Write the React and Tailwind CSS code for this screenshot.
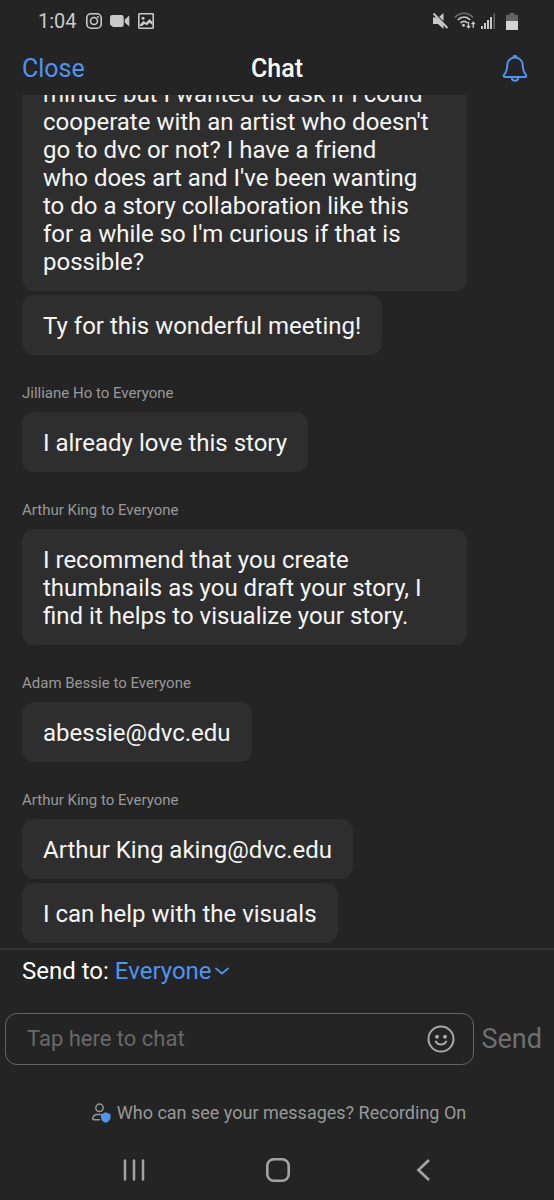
import React from "react";

const groups = [
  {
    messages: [
      "minute but I wanted to ask if I could\ncooperate with an artist who doesn't\ngo to dvc or not? I have a friend\nwho does art and I've been wanting\nto do a story collaboration like this\nfor a while so I'm curious if that is\npossible?",
      "Ty for this wonderful meeting!",
    ],
  },
  { from: "Jilliane Ho to Everyone", messages: ["I already love this story"] },
  {
    from: "Arthur King to Everyone",
    messages: [
      "I recommend that you create thumbnails as you draft your story, I find it helps to visualize your story.",
    ],
  },
  { from: "Adam Bessie to Everyone", messages: ["abessie@dvc.edu"] },
  {
    from: "Arthur King to Everyone",
    messages: ["Arthur King aking@dvc.edu", "I can help with the visuals"],
  },
];

function StatusBar() {
  return (
    <div className="flex h-[42px] shrink-0 items-center justify-between pl-[38px] pr-9 text-[#c9c9c9]">
      <div className="flex items-center gap-2">
        <span className="mr-px text-xl leading-6">1:04</span>
        <svg width="16" height="16" viewBox="0 0 16 16" fill="none" stroke="currentColor" strokeWidth="1.6" aria-hidden="true">
          <rect x="0.8" y="0.8" width="14.4" height="14.4" rx="4.2" />
          <circle cx="8" cy="8" r="3.5" />
          <circle cx="12" cy="4" r="1" fill="currentColor" stroke="none" />
        </svg>
        <svg width="20" height="12" viewBox="0 0 20 12" fill="currentColor" aria-hidden="true">
          <path d="M2.200 0h9.300a2.200 2.200 0 0 1 2.200 2.200v7.600a2.200 2.200 0 0 1-2.200 2.200H3L0 9.500V2.200A2.200 2.200 0 0 1 2.200 0z" />
          <path d="M14.800 4.500 19.300.6v10.800l-4.500-3.900z" />
        </svg>
        <svg width="16" height="16" viewBox="0 0 16 16" aria-hidden="true">
          <rect x="0.8" y="0.8" width="14.4" height="14.4" rx="0.6" fill="none" stroke="currentColor" strokeWidth="1.6" />
          <circle cx="5" cy="5.200" r="1.500" fill="currentColor" />
          <path d="M2 11.500 5.500 7.800 8 9.800 11.500 6l3 3v3l-3-2.200-2.500 2.400L6.500 11l-2.500 2H2z" fill="currentColor" />
        </svg>
      </div>
      <div className="flex items-center">
        <svg width="17" height="18" viewBox="0 0 17 18" aria-hidden="true">
          <path d="M1 5.500h3l7.500 7.200V17L6 12H1zM11.500 1v8L7.200 4.800z" fill="currentColor" />
          <path d="M1.500 1.500 15.500 16" stroke="currentColor" strokeWidth="1.8" />
        </svg>
        <svg className="ml-[5px]" width="22" height="18" viewBox="0 0 22 18" fill="none" stroke="currentColor" strokeWidth="1.7" aria-hidden="true">
          <path d="M1 5.500C6-.2 14-.2 19 5.500" opacity=".45" />
          <path d="M3.800 8C7.500 4 12.500 4 16.200 8M6.500 11c2-2.200 5-2.200 7 0" />
          <circle cx="9.500" cy="13.200" r="1.500" fill="currentColor" stroke="none" />
          <path d="M14.500 10v5.500M12.800 13.800l1.700 2 1.700-2M19.200 16v-5.500M17.500 12.200l1.700-2 1.700 2" strokeWidth="1.3" />
        </svg>
        <svg className="ml-[5px]" width="15" height="16" viewBox="0 0 15 16" fill="currentColor" aria-hidden="true">
          <rect x="0" y="13" width="2" height="3" />
          <rect x="3" y="10" width="2" height="6" />
          <rect x="6" y="7" width="2" height="9" />
          <rect x="9" y="4" width="2" height="12" />
          <rect x="12.500" y="0.500" width="1.500" height="15.500" opacity=".4" />
        </svg>
        <svg className="ml-[10px]" width="12" height="17" viewBox="0 0 12 17" aria-hidden="true">
          <path d="M3.500 0h5v2H12v6H0V2h3.500z" fill="#646464" />
          <path d="M0 8h12v9H0z" fill="#d2d2d2" />
        </svg>
      </div>
    </div>
  );
}

function Header() {
  return (
    <header className="grid h-[53px] shrink-0 grid-cols-3 items-center px-[22px]">
      <button type="button" className="justify-self-start text-[25px] leading-8 text-[#4f94ee]">
        Close
      </button>
      <h1 className="justify-self-center text-[25px] leading-8 font-medium text-white">Chat</h1>
      <button type="button" aria-label="Notifications" className="justify-self-end text-[#4f94ee]">
        <svg width="34" height="28" viewBox="0 0 34 28" fill="none" stroke="currentColor" strokeWidth="2" strokeLinecap="round" strokeLinejoin="round" aria-hidden="true">
          <path d="M17 2.500C12.200 2.500 9.200 6 9.200 10.500c0 5-1 7-3.100 9.300-.8 1-.3 2.200.9 2.200h20c1.200 0 1.700-1.200.9-2.200-2.100-2.300-3.100-4.300-3.100-9.300 0-4.500-3-8-7.800-8z" />
          <path d="M15.500 2.200a1.500 1.300 0 0 1 3 0" />
          <path d="M13.800 22.500c0 1.800 1.300 3.300 3.200 3.300s3.200-1.500 3.200-3.300" />
        </svg>
      </button>
    </header>
  );
}

function Messages() {
  return (
    <main className="flex min-h-0 flex-1 flex-col justify-end overflow-hidden pr-[87px] pb-[5px] pl-[22px]">
      {groups.map((group, i) => (
        <section key={i}>
          {group.from && (
            <h2 className="mt-7 mb-[9px] text-[15px] leading-5 text-[#989898]">{group.from}</h2>
          )}
          <div className="flex flex-col items-start gap-1">
            {group.messages.map((text) => (
              <p
                key={text}
                className={
                  "rounded-xl bg-[#2e2e2e] px-[21px] pt-[17px] pb-[15px] text-2xl leading-7 whitespace-pre-line text-[#f5f5f5]" +
                  (text.length > 40 ? " w-full" : "")
                }
              >
                {text}
              </p>
            ))}
          </div>
        </section>
      ))}
    </main>
  );
}

function Composer() {
  return (
    <form className="shrink-0 border-t-2 border-[#353535]" onSubmit={(e) => e.preventDefault()}>
      <div className="flex h-[42px] items-center gap-[6px] pl-[22px] text-2xl leading-7 text-white">
        <span>Send to:</span>
        <button type="button" className="flex items-center gap-[3px] text-[#4f94ee]">
          Everyone
          <svg width="14" height="8" viewBox="0 0 14 8" fill="none" stroke="currentColor" strokeWidth="1.8" strokeLinecap="round" strokeLinejoin="round" aria-hidden="true">
            <path d="M1 1.500 7 6.500l6-5" />
          </svg>
        </button>
      </div>
      <div className="mt-[21px] flex items-center gap-2 pr-3 pl-[5px]">
        <div className="flex h-[52px] min-w-0 flex-1 items-center rounded-xl border border-[#666] pr-[18px] pl-[21px]">
          <input
            type="text"
            aria-label="Chat message"
            placeholder="Tap here to chat"
            className="min-w-0 flex-1 bg-transparent text-[22px] leading-7 text-white outline-none placeholder:text-[#686868]"
          />
          <button type="button" aria-label="Emoji" className="text-[#a9a9a9]">
            <svg width="28" height="28" viewBox="0 0 28 28" fill="none" stroke="currentColor" strokeWidth="2" strokeLinecap="round" aria-hidden="true">
              <circle cx="14" cy="14" r="12.500" />
              <circle cx="10" cy="11.800" r="2" fill="currentColor" stroke="none" />
              <circle cx="18" cy="11.800" r="2" fill="currentColor" stroke="none" />
              <path d="M8.800 16.500c2.300 4 8.100 4 10.400 0" />
            </svg>
          </button>
        </div>
        <button type="submit" className="text-[27px] leading-8 text-[#6f6f6f]">
          Send
        </button>
      </div>
      <div className="mt-9 flex justify-center pl-1">
        <button type="button" className="flex items-center gap-[6px] text-lg leading-6 text-[#989898]">
          <svg width="19" height="20" viewBox="0 0 19 20" aria-hidden="true">
            <g fill="none" stroke="currentColor" strokeWidth="1.5" strokeLinecap="round">
              <circle cx="7.500" cy="4.800" r="3.700" />
              <path d="M7.500 16.700H1.700c-.6 0-.9-.3-.9-.9 0-2.700 2-4.300 4.500-4.300h3" />
            </g>
            <path d="M13.700 9.300 18.500 11.200v3.300c0 2.500-2 4.300-4.800 5.300-2.800-1-4.800-2.800-4.800-5.300v-3.300z" fill="#4f94ee" />
          </svg>
          Who can see your messages? Recording On
        </button>
      </div>
    </form>
  );
}

function SystemNav() {
  return (
    <nav aria-label="System" className="mt-[14px] flex h-[61px] shrink-0 items-center justify-around pr-[59px] pl-[62px] text-[#a3a3a3]">
      <button type="button" aria-label="Recent apps">
        <svg width="24" height="24" viewBox="0 0 24 24" stroke="currentColor" strokeWidth="2.5" strokeLinecap="round" aria-hidden="true">
          <path d="M3 2.500v19M12 2.500v19M21 2.500v19" />
        </svg>
      </button>
      <button type="button" aria-label="Home">
        <svg width="26" height="26" viewBox="0 0 26 26" fill="none" stroke="currentColor" strokeWidth="2.6" aria-hidden="true">
          <rect x="2.300" y="2.300" width="21.400" height="21.400" rx="6.500" />
        </svg>
      </button>
      <button type="button" aria-label="Back">
        <svg width="24" height="24" viewBox="0 0 24 24" fill="none" stroke="currentColor" strokeWidth="2.7" strokeLinecap="square" aria-hidden="true">
          <path d="M17 3 7.500 12l9.500 9" />
        </svg>
      </button>
    </nav>
  );
}

export default function App() {
  return (
    <div className="flex h-screen flex-col bg-[#242424] font-[Roboto,sans-serif]">
      <StatusBar />
      <Header />
      <Messages />
      <Composer />
      <SystemNav />
    </div>
  );
}
